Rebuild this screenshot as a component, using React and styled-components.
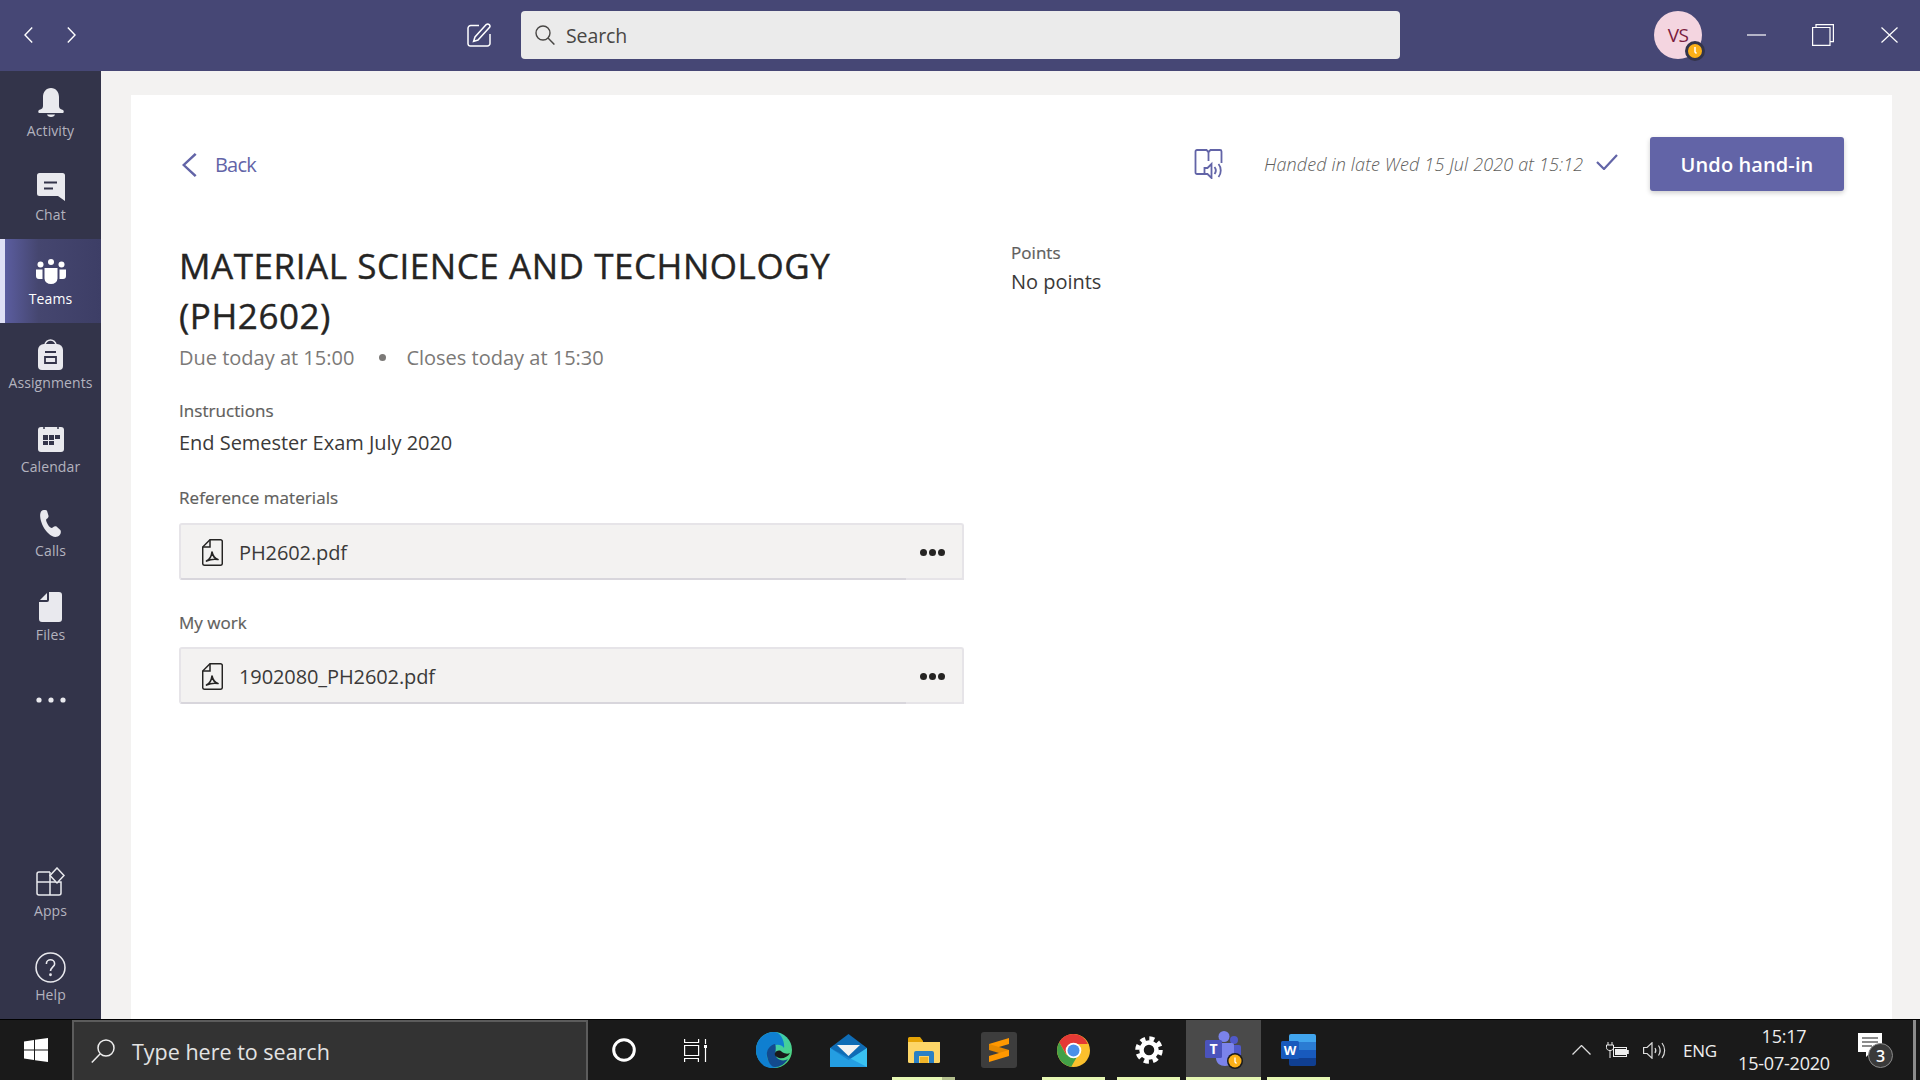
import React from "react";
import styled, { createGlobalStyle } from "styled-components";

const GlobalStyle = createGlobalStyle`
  html, body { margin: 0; padding: 0; height: 100%; overflow: hidden; }
  body { font-family: "Open Sans", "Noto Sans", sans-serif; background: #f3f2f1; }
  #root { height: 100%; }
  * { box-sizing: border-box; }
`;

const Page = styled.div`
  width: 1920px;
  height: 1080px;
  display: flex;
  flex-direction: column;
`;

/* top title bar */
const TitleBar = styled.header`
  height: 71px;
  flex: none;
  padding-bottom: 1px;
  display: flex;
  align-items: center;
  background: #464775;
  color: #fff;
`;
const NavArrows = styled.div`
  display: flex;
  gap: 34px;
  margin-left: 24px;
`;
const Compose = styled.div`
  display: flex;
  margin-left: 391px;
`;
const SearchBox = styled.div`
  width: 879px;
  height: 48px;
  margin-left: 30px;
  padding-left: 14px;
  display: flex;
  align-items: center;
  gap: 11px;
  background: #ebebeb;
  border-radius: 4px;
  color: #484644;
  font-size: 19.5px;
  letter-spacing: -0.1px;
`;
const Avatar = styled.div`
  position: relative;
  width: 48px;
  height: 48px;
  margin-left: 254px;
  border-radius: 50%;
  background: #f4d5e0;
  color: #7a1c3e;
  font-size: 19px;
  letter-spacing: -0.5px;
  display: flex;
  align-items: center;
  justify-content: center;
`;
const Presence = styled.span`
  position: absolute;
  right: -3px;
  bottom: -2px;
  width: 20px;
  height: 20px;
  border-radius: 50%;
  background: #fbb018;
  border: 3px solid #33344a;
  display: flex;
`;
const WindowButton = styled.div`
  display: flex;
  margin-left: ${(p) => p.$gap}px;
`;

/* rail + stage */
const Middle = styled.div`
  flex: 1;
  min-height: 0;
  display: flex;
`;
const Rail = styled.nav`
  width: 101px;
  flex: none;
  display: flex;
  flex-direction: column;
  background: #33344a;
`;
const RailSpacer = styled.div`
  flex: 1;
`;
const RailItem = styled.div`
  height: 84px;
  flex: none;
  padding-top: ${(p) => p.$top || 16}px;
  display: flex;
  flex-direction: column;
  align-items: center;
  color: ${(p) => (p.$active ? "#fff" : "#b3b3bf")};
  ${(p) =>
    p.$active &&
    `
    background: linear-gradient(90deg, #5b5d9f 0, #45466f 35%, #3d3e66 100%);
    border-left: 5px solid #dfe0f5;
    padding-right: 5px;
  `}
`;
const RailIcon = styled.div`
  height: 32px;
  display: flex;
  align-items: center;
  justify-content: center;
  color: ${(p) => (p.$active ? "#fff" : "#e9e9ee")};
`;
const RailLabel = styled.span`
  margin-top: 2px;
  font-size: 14px;
  line-height: 20px;
  letter-spacing: 0.1px;
`;
const Stage = styled.main`
  flex: 1;
  padding: 24px 28px 0 30px;
  background: #f3f2f1;
  display: flex;
`;
const Panel = styled.section`
  flex: 1;
  background: #fff;
  padding: 42px 48px 0 48px;
`;
const TopRow = styled.div`
  height: 54px;
  display: flex;
  align-items: center;
  justify-content: space-between;
`;
const BackLink = styled.div`
  display: flex;
  align-items: center;
  gap: 18px;
  margin-left: 3px;
  padding-top: 1px;
  color: #6264a7;
  font-size: 20px;
  letter-spacing: -0.8px;
`;
const Status = styled.div`
  display: flex;
  align-items: center;
`;
const HandedText = styled.span`
  margin-left: 40px;
  width: 320px;
  font-size: 18px;
  font-style: italic;
  font-weight: 300;
  letter-spacing: 0.14px;
  white-space: nowrap;
  color: #605e5c;
`;
const CheckMark = styled.div`
  display: flex;
  margin-left: 12px;
  margin-top: -4px;
`;
const UndoButton = styled.button`
  width: 194px;
  height: 54px;
  margin-left: 32px;
  border: none;
  border-radius: 3px;
  background: #6264a7;
  color: #fff;
  font-family: inherit;
  font-size: 20px;
  font-weight: 600;
  letter-spacing: 0.1px;
  box-shadow: 0 2px 5px rgba(0, 0, 0, 0.2);
`;
const Columns = styled.div`
  display: flex;
  gap: 47px;
  margin-top: 50px;
`;
const LeftColumn = styled.div`
  width: 785px;
`;
const RightColumn = styled.div`
  flex: 1;
`;
const Title = styled.h1`
  margin: 0;
  font-size: 35px;
  line-height: 50px;
  font-weight: 500;
  letter-spacing: 0.55px;
  -webkit-text-stroke: 0.4px #252423;
  color: #252423;
`;
const DueRow = styled.div`
  margin-top: 2px;
  height: 28px;
  display: flex;
  align-items: center;
  font-size: 20px;
  letter-spacing: 0;
  color: #7b7977;
`;
const Bullet = styled.span`
  width: 7px;
  height: 7px;
  margin: 0 20px 0 25px;
  border-radius: 50%;
  background: #7b7977;
`;
const SectionLabel = styled.div`
  margin-top: ${(p) => p.$top}px;
  font-size: 17px;
  line-height: 24px;
  font-weight: 500;
  letter-spacing: 0.05px;
  -webkit-text-stroke: 0.2px #605e5c;
  color: #605e5c;
`;
const BodyText = styled.div`
  margin-top: ${(p) => p.$top}px;
  font-size: 20px;
  line-height: 28px;
  letter-spacing: -0.03px;
  color: #3b3a39;
`;
const FileCard = styled.div`
  position: relative;
  height: 57px;
  margin-top: ${(p) => p.$top}px;
  padding: 1px 17px 0 21px;
  display: flex;
  align-items: center;
  background: #f3f2f1;
  border: 2px solid #e6e4e8;
  border-bottom-color: #d8d6dc;
  border-radius: 3px;

  &::after {
    content: "";
    position: absolute;
    right: -2px;
    bottom: -2px;
    width: 58px;
    height: 2px;
    background: #e6e4e8;
  }
`;
const FileName = styled.span`
  margin-left: 16px;
  font-size: 20px;
  letter-spacing: -0.1px;
  color: #3b3a39;
`;
const MoreDots = styled.div`
  margin-left: auto;
  display: flex;
  gap: 2px;
`;
const Dot = styled.i`
  width: 7px;
  height: 7px;
  border-radius: 50%;
  background: #252423;
`;

/* windows taskbar */
const Taskbar = styled.footer`
  height: 61px;
  flex: none;
  display: flex;
  align-items: stretch;
  background: #1a1a1a;
  border-top: 1px solid #000;
  color: #fff;
`;
const StartCell = styled.div`
  width: 72px;
  flex: none;
  padding-left: 24px;
  display: flex;
  align-items: center;
`;
const TaskSearch = styled.div`
  width: 516px;
  flex: none;
  padding-left: 17px;
  display: flex;
  align-items: center;
  gap: 16px;
  background: #333;
  border: 2px solid #5c5c5c;
  border-bottom: none;
  font-size: 21.5px;
  letter-spacing: 0;
  color: #e3e3e3;
`;
const TaskCell = styled.div`
  position: relative;
  width: ${(p) => p.$w || 75}px;
  flex: none;
  margin-left: ${(p) => p.$ml || 0}px;
  display: flex;
  align-items: center;
  justify-content: center;
  background: ${(p) => (p.$current ? "#4a4a4a" : "transparent")};
  ${(p) =>
    p.$open &&
    `
    &::after {
      content: "";
      position: absolute;
      left: ${p.$current ? 0 : 6}px;
      right: ${p.$current ? 0 : 6}px;
      bottom: 0;
      height: 3px;
      background: ${p.$stacked ? "linear-gradient(90deg, #e6f7b3 80%, #b4c08e 80%)" : "#e6f7b3"};
    }
  `}
`;
const Tray = styled.div`
  flex: 1;
  display: flex;
  align-items: center;
  padding-left: 236px;
  position: relative;
`;
const TrayIcon = styled.div`
  display: flex;
  margin-left: ${(p) => p.$ml}px;
`;
const TrayText = styled.span`
  margin-left: 17px;
  font-size: 17px;
  letter-spacing: -0.2px;
  color: #eee;
`;
const Clock = styled.div`
  width: 96px;
  margin-left: 19px;
  text-align: center;
  font-size: 18px;
  line-height: 27px;
  letter-spacing: -0.2px;
  color: #eee;
`;
const Notice = styled.div`
  position: relative;
  display: flex;
  margin-left: 26px;
  margin-top: -10px;
`;
const NoticeBadge = styled.span`
  position: absolute;
  left: 10px;
  top: 10px;
  width: 25px;
  height: 25px;
  border-radius: 50%;
  background: #3a3a3a;
  border: 1.5px solid #8a8a8a;
  display: flex;
  align-items: center;
  justify-content: center;
  font-size: 16px;
  font-weight: 600;
`;
const DesktopEdge = styled.div`
  position: absolute;
  right: 4px;
  top: 0;
  bottom: 0;
  width: 3px;
  background: #8c8c8c;
`;

/* ---- drawings ---- */
const Chevron = ({ dir = "left", w = 9, h = 16, sw = 1.4, color = "#fff" }) => (
  <svg width={w} height={h} viewBox="0 0 9 16" fill="none" preserveAspectRatio="none">
    <path d={dir === "left" ? "M8.2 .6 1 8l7.2 7.4" : "M.8 .6 8 8 .8 15.4"} stroke={color} strokeWidth={sw} />
  </svg>
);

const ComposeIcon = () => (
  <svg width="24" height="24" viewBox="0 0 24 24" fill="none" stroke="#fff" strokeWidth="1.5">
    <path d="M12 2.5H4A2.8 2.8 0 0 0 1 5.3v15.4A2.5 2.5 0 0 0 3.6 23h16.6a2.6 2.6 0 0 0 2.8-2.6V11" />
    <path d="M19.2 1.6a2.2 2.2 0 0 1 3.2 3L11 17l-4.4 1.4L8 14z" />
  </svg>
);

const SearchIcon = ({ color = "#484644", size = 20 }) => (
  <svg width={size} height={size} viewBox="0 0 20 20" fill="none" stroke={color} strokeWidth="1.4">
    <circle cx="8" cy="8" r="7" />
    <path d="m13 13 6.4 6.6" />
  </svg>
);

const BellIcon = () => (
  <svg width="26" height="30" viewBox="0 0 26 30" fill="currentColor">
    <path d="M13 0C8 0 5 4 5 9v9c0 2-1 3-4 4-1 .4-1 3 0 3h24c1 0 1-2.600 0-3-3-1-4-2-4-4V9c0-5-3-9-8-9z" />
    <path d="M9 26.500h8c0 1-2 2.500-4 2.500s-4-1.500-4-2.500z" />
  </svg>
);
const ChatIcon = () => (
  <svg width="28" height="28" viewBox="0 0 28 28">
    <path fill="currentColor" d="M2.500 0h23A2.500 2.500 0 0 1 28 2.500V28l-7-5H2.500A2.500 2.500 0 0 1 0 20.500v-18A2.500 2.500 0 0 1 2.500 0z" />
    <path stroke="#33344a" strokeWidth="2" d="M7 9.500h13M7 15.500h9" />
  </svg>
);
const TeamsRailIcon = () => (
  <svg width="30" height="25" viewBox="0 0 30 25" fill="currentColor">
    <circle cx="15" cy="3" r="3" />
    <circle cx="4.500" cy="5.500" r="3" />
    <circle cx="25.500" cy="5.500" r="3" />
    <path d="M0 10.500h6.500v9.500H3a3 3 0 0 1-3-3zM23.500 10.500H30V17a3 3 0 0 1-3 3h-3.500z" />
    <path d="M8.500 9h13v10.500a6.500 5.500 0 0 1-13 0z" />
  </svg>
);
const BagIcon = () => (
  <svg width="25" height="33" viewBox="0 0 25 33">
    <path fill="none" stroke="currentColor" strokeWidth="1.500" d="M7 6c0-3 3-5 5.500-5S18 3 18 6" />
    <path fill="currentColor" d="M6 5h13a6 6 0 0 1 6 6v16a4 4 0 0 1-4 4H4a4 4 0 0 1-4-4V11a6 6 0 0 1 6-6z" />
    <path fill="none" stroke="#33344a" strokeWidth="1.800" d="M7 13h11M7 18h11v6H7z" />
  </svg>
);
const CalendarIcon = () => (
  <svg width="26" height="28" viewBox="0 0 26 28">
    <path fill="currentColor" d="M3 2h20a3 3 0 0 1 3 3v19a3 3 0 0 1-3 3H3a3 3 0 0 1-3-3V5a3 3 0 0 1 3-3z" />
    <path stroke="#33344a" strokeWidth="1.500" d="M6 0v4M20 0v4" />
    <path fill="#33344a" d="M5 10h5v5H5zM11 10h5v5h-5zM17 10h5v4h-5zM5 16h5v4H5zM11 16h5v4h-5z" />
  </svg>
);
const PhoneIcon = () => (
  <svg width="22" height="27" viewBox="0 0 22 27" fill="currentColor">
    <path d="M1.500 1C3-.3 6-.4 7 .8l1.500 5c.3 1.200-.6 2.400-2 3.200-.6.500-.5 1.500 0 2.800.8 2.200 2 4.200 3.600 5.500 1 .7 2 .8 2.600.3 1.200-1 2.700-1.600 3.800-1l3.800 3.400c1 1 .6 3.800-.8 5.300-1.600 1.700-4.800 2.200-7.500.7-4.800-2.800-8.700-8-10.600-13.800C-.2 7.800-.4 3 1.500 1z" />
  </svg>
);
const FileIcon = () => (
  <svg width="23" height="30" viewBox="0 0 23 30" fill="currentColor">
    <path d="M10 0h10a3 3 0 0 1 3 3v24a3 3 0 0 1-3 3H3a3 3 0 0 1-3-3V10h8a2 2 0 0 0 2-2z" />
    <path d="M8 1v6.500a.5.5 0 0 1-.5.500H1z" />
  </svg>
);
const AppsIcon = () => (
  <svg width="29" height="32" viewBox="0 0 29 32" fill="none" stroke="currentColor" strokeWidth="1.500">
    <path d="M14 5H3a2 2 0 0 0-2 2v19a2 2 0 0 0 2 2h20a2 2 0 0 0 2-2V15H1M14 5v23" />
    <path d="m21 1 7 7.500-7 7.500-7-7.500z" fill="#33344a" />
  </svg>
);
const HelpIcon = () => (
  <svg width="31" height="31" viewBox="0 0 30 30" fill="none" stroke="currentColor" strokeWidth="1.500">
    <circle cx="15" cy="15" r="14" />
    <path d="M11 11.500c0-2.500 2-4 4-4s4 1.500 4 4-4 3.500-4 7" />
    <circle cx="15" cy="22" r=".6" fill="currentColor" />
  </svg>
);
const ClockTick = () => (
  <svg width="14" height="14" viewBox="0 0 14 14" fill="none" stroke="#fff" strokeWidth="1.500">
    <path d="M7 3v5l1.500 1.500" />
  </svg>
);
const BookAudioIcon = () => (
  <svg width="31" height="30" viewBox="0 0 28 30" fill="none" stroke="#6264a7" strokeWidth="1.800">
    <path d="M13 25H2.500A1.500 1.500 0 0 1 1 23.500V2.500A1.500 1.500 0 0 1 2.500 1H12l2 2 2-2h9.500A1.500 1.500 0 0 1 27 2.500V14" />
    <path d="M14 3v9" />
    <path d="M10 19h3l4-4v14l-4-4h-3z" fill="#fff" />
    <path d="M20 18c1.500 2 1.500 5 0 7M24 15c3 3.500 3 9.500 0 13" />
  </svg>
);
const PdfIcon = () => (
  <svg width="21" height="27" viewBox="0 0 21 27" fill="none" stroke="#252423" strokeWidth="1.500">
    <path d="M8 .8h10.500a1.800 1.800 0 0 1 1.800 1.800v21.800a1.800 1.800 0 0 1-1.800 1.800h-16a1.800 1.800 0 0 1-1.800-1.800V8z" />
    <path d="M8 .8V8H.7" />
    <path d="M4.500 22c3-1.500 5-4.500 5.500-9 .8 4 2.500 6.500 6 7.500-3.500-.5-8 0-11.500 1.500z" strokeWidth="1.700" strokeLinejoin="round" />
  </svg>
);

const WindowsLogo = () => (
  <svg width="24" height="24" viewBox="0 0 24 24" fill="#fff">
    <path d="M0 3.400 10 2v9.500H0zM11 1.800 24 0v11.500H11zM0 12.500h10V22L0 20.600zM11 12.500h13V24l-13-1.800z" />
  </svg>
);
const CortanaIcon = () => (
  <svg width="24" height="24" viewBox="0 0 24 24" fill="none" stroke="#fff" strokeWidth="3">
    <circle cx="12" cy="12" r="10.300" />
  </svg>
);
const TaskViewIcon = () => (
  <svg width="23" height="23" viewBox="0 0 23 23" fill="none" stroke="#fff" strokeWidth="1.200">
    <path d="M.6 0v3.500h14V0M.6 6.500h14v10H.6zM0 19.500h15M.6 19.500V23M14.400 19.500V23M21.500 0v5M21.500 9v14" />
    <rect x="20" y="6" width="3" height="3" fill="#fff" stroke="none" />
  </svg>
);
const EdgeIcon = () => (
  <svg width="36" height="36" viewBox="0 0 36 36">
    <defs>
      <linearGradient id="edgeA" x1="0" y1="0" x2="1" y2="1">
        <stop offset="0" stopColor="#2fc3d6" />
        <stop offset="1" stopColor="#54d86f" />
      </linearGradient>
    </defs>
    <circle cx="18" cy="18" r="18" fill="url(#edgeA)" />
    <path fill="#0f7fd0" d="M18 0C8 0 0 8 0 18c0 10 7 18 16 18 3 0 6-1 8-2-6 1-12-3-13-9-1-6 3-11 9-12 4-.6 7 1 8 3 1-6-3-16-10-16z" />
    <path fill="#134a8e" d="M11 24c-1-6 3-11 8-12 2 4-1 10 2 14 3 3 8 3 11 1-3 5-8 8-13 8-4 0-7-5-8-11z" />
    <path fill="#1a1a1a" d="M19 21c2-3 5-3 7-1 3 2 6 2 8 1-2 4-7 6-11 5-3-1-5-3-4-5z" />
  </svg>
);
const MailIcon = () => (
  <svg width="37" height="33" viewBox="0 0 37 33">
    <path fill="#0f6cb5" d="M18.500 0 37 14v19H0V14z" />
    <path fill="#f2f2f2" d="M7 11h23L18.500 22z" />
    <path fill="#39c1f1" d="M0 14 18.500 26 37 14v19H0z" />
    <path fill="#1b8fdc" d="M0 33V14l37 19z" opacity=".7" />
  </svg>
);
const FolderIcon = () => (
  <svg width="32" height="26" viewBox="0 0 32 26">
    <path fill="#e5a406" d="M0 1.500A1.500 1.500 0 0 1 1.500 0H12l3 4v6H0z" />
    <path fill="#fdd667" d="M0 5h32v19.500a1.500 1.500 0 0 1-1.500 1.500h-29A1.500 1.500 0 0 1 0 24.500z" />
    <path fill="#2a80c4" d="M6 26V16a2 2 0 0 1 2-2h16a2 2 0 0 1 2 2v10h-5v-7H11v7z" />
    <path fill="#f0b429" d="M12 20h8v6h-8z" />
  </svg>
);
const SublimeIcon = () => (
  <svg width="36" height="36" viewBox="0 0 36 36">
    <rect width="36" height="36" rx="3" fill="#3d3d3d" />
    <path fill="#ff9800" d="M8 12 28 6v6L8 18z" />
    <path fill="#e58900" d="M8 12 28 18v6L8 18z" />
    <path fill="#ff9800" d="M28 18 8 24v6l20-6z" />
  </svg>
);
const ChromeIcon = () => (
  <svg width="33" height="33" viewBox="0 0 33 33">
    <circle cx="16.500" cy="16.500" r="16.500" fill="#fbc02d" />
    <path fill="#e53935" d="M16.500 0A16.500 16.500 0 0 0 2.200 8.300l7 12L16.500 10h14.300A16.500 16.500 0 0 0 16.500 0z" />
    <path fill="#43a047" d="M2.200 8.300a16.500 16.500 0 0 0 12 24.500l7-12-12 .0z" />
    <circle cx="16.500" cy="16.500" r="7.800" fill="#fff" />
    <circle cx="16.500" cy="16.500" r="6" fill="#4a90e8" />
  </svg>
);
const GearIcon = () => (
  <svg width="28" height="28" viewBox="0 0 28 28" fill="none" stroke="#fff">
    <circle cx="14" cy="14" r="7.500" strokeWidth="4.500" />
    <circle cx="14" cy="14" r="11.500" strokeWidth="4.500" strokeDasharray="5 4.030" />
  </svg>
);
const TeamsAppIcon = () => (
  <svg width="38" height="38" viewBox="0 0 38 38">
    <circle cx="19" cy="5.500" r="5.500" fill="#7b83eb" />
    <circle cx="29" cy="9" r="4" fill="#5059c9" />
    <path fill="#5059c9" d="M24 14h10a2 2 0 0 1 2 2v9c0 3-3 5-6 5h-6z" />
    <path fill="#7b83eb" d="M11 12h16a2 2 0 0 1 2 2v13c0 5-4 8-9 8s-9-3-9-8z" />
    <rect x="0" y="9" width="17" height="18" rx="1.500" fill="#4b53bc" />
    <text x="8.500" y="23" textAnchor="middle" fontFamily="Open Sans, sans-serif" fontSize="14" fontWeight="700" fill="#fff">T</text>
    <circle cx="30" cy="30" r="8" fill="#1a1a1a" />
    <circle cx="30" cy="30" r="6.500" fill="#fbb018" />
    <path stroke="#fff" strokeWidth="1.300" fill="none" d="M30 26.500V31l1.500 1.500" />
  </svg>
);
const WordIcon = () => (
  <svg width="35" height="32" viewBox="0 0 35 32">
    <path fill="#41a5ee" d="M10 0h23a2 2 0 0 1 2 2v6H8V2a2 2 0 0 1 2-2z" />
    <path fill="#2b7cd3" d="M8 8h27v8H8z" />
    <path fill="#185abd" d="M8 16h27v8H8z" />
    <path fill="#103f91" d="M8 24h27v6a2 2 0 0 1-2 2H10a2 2 0 0 1-2-2z" />
    <rect x="0" y="7" width="18" height="18" rx="1.500" fill="#185abd" />
    <text x="9" y="21" textAnchor="middle" fontFamily="Open Sans, sans-serif" fontSize="13" fontWeight="700" fill="#fff">W</text>
  </svg>
);
const TrayChevron = () => (
  <svg width="19" height="10" viewBox="0 0 19 10" fill="none" stroke="#ddd" strokeWidth="1.300">
    <path d="m.5 9.500 9-9 9 9" />
  </svg>
);
const BatteryIcon = () => (
  <svg width="23" height="17" viewBox="0 0 23 17" fill="none" stroke="#eee" strokeWidth="1">
    <path d="M2 0v3M6 0v3M.5 3h7v2.500c0 2-1.500 3-3.500 3S.5 7.500.5 5.500zM4 8.500V16" />
    <rect x="7.500" y="5.500" width="13" height="9" fill="#1a1a1a" />
    <rect x="9" y="7" width="11" height="6" fill="#eee" stroke="none" />
    <path d="M21.800 8v4" strokeWidth="2" />
  </svg>
);
const VolumeIcon = () => (
  <svg width="23" height="17" viewBox="0 0 23 17" fill="none" stroke="#ddd" strokeWidth="1.200">
    <path d="M.6 5.500h3.500L9 .8v15.400l-4.900-4.700H.6z" />
    <path d="M12 6c1 1.500 1 3.500 0 5M15.500 3.500c2 3 2 7 0 10M19 1c3.500 4.500 3.500 10.500 0 15" />
  </svg>
);
const NoticeIcon = () => (
  <svg width="24" height="24" viewBox="0 0 24 24">
    <path fill="#fff" d="M0 0h24v19H13l-5 5v-5H0z" />
    <path stroke="#1a1a1a" strokeWidth="1.200" d="M4 5h16M4 9h16M4 13h10" />
  </svg>
);

const FileRow = ({ name, top }) => (
  <FileCard $top={top}>
    <PdfIcon />
    <FileName>{name}</FileName>
    <MoreDots>
      <Dot />
      <Dot />
      <Dot />
    </MoreDots>
  </FileCard>
);

const railTop = [
  { label: "Activity", icon: <BellIcon /> },
  { label: "Chat", icon: <ChatIcon /> },
  { label: "Teams", icon: <TeamsRailIcon />, active: true },
  { label: "Assignments", icon: <BagIcon /> },
  { label: "Calendar", icon: <CalendarIcon /> },
  { label: "Calls", icon: <PhoneIcon /> },
  { label: "Files", icon: <FileIcon /> },
];

const apps = [
  { icon: <EdgeIcon /> },
  { icon: <MailIcon /> },
  { icon: <FolderIcon />, open: true, stacked: true },
  { icon: <SublimeIcon /> },
  { icon: <ChromeIcon />, open: true },
  { icon: <GearIcon />, open: true },
  { icon: <TeamsAppIcon />, open: true, current: true },
  { icon: <WordIcon />, open: true },
];

export default function App() {
  return (
    <Page>
      <GlobalStyle />
      <TitleBar>
        <NavArrows>
          <Chevron dir="left" />
          <Chevron dir="right" />
        </NavArrows>
        <Compose>
          <ComposeIcon />
        </Compose>
        <SearchBox>
          <SearchIcon />
          Search
        </SearchBox>
        <Avatar>
          VS
          <Presence>
            <ClockTick />
          </Presence>
        </Avatar>
        <WindowButton $gap={45}>
          <svg width="19" height="2" viewBox="0 0 19 2">
            <path d="M0 1h19" stroke="#fff" strokeWidth="1.200" />
          </svg>
        </WindowButton>
        <WindowButton $gap={46}>
          <svg width="22" height="22" viewBox="0 0 22 22" fill="none" stroke="#fff" strokeWidth="1.200">
            <path d="M4 3V.6h17.400v17H18" />
            <path d="M.6 3.500h17.400v17.900H.6z" />
          </svg>
        </WindowButton>
        <WindowButton $gap={47}>
          <svg width="17" height="16" viewBox="0 0 17 16" fill="none" stroke="#fff" strokeWidth="1.200">
            <path d="m.5.5 16 15M16.500.5l-16 15" />
          </svg>
        </WindowButton>
      </TitleBar>

      <Middle>
        <Rail>
          {railTop.map((item) => (
            <RailItem key={item.label} $active={item.active}>
              <RailIcon $active={item.active}>{item.icon}</RailIcon>
              <RailLabel>{item.label}</RailLabel>
            </RailItem>
          ))}
          <RailItem $top={25}>
            <RailIcon>
              <svg width="30" height="6" viewBox="0 0 30 6" fill="currentColor">
                <circle cx="3" cy="3" r="2.600" />
                <circle cx="15" cy="3" r="2.600" />
                <circle cx="27" cy="3" r="2.600" />
              </svg>
            </RailIcon>
          </RailItem>
          <RailSpacer />
          <RailItem>
            <RailIcon>
              <AppsIcon />
            </RailIcon>
            <RailLabel>Apps</RailLabel>
          </RailItem>
          <RailItem>
            <RailIcon>
              <HelpIcon />
            </RailIcon>
            <RailLabel>Help</RailLabel>
          </RailItem>
        </Rail>

        <Stage>
          <Panel>
            <TopRow>
              <BackLink>
                <Chevron dir="left" w={15} h={24} sw={1.5} color="#6264a7" />
                Back
              </BackLink>
              <Status>
                <BookAudioIcon />
                <HandedText>Handed in late Wed 15 Jul 2020 at 15:12</HandedText>
                <CheckMark>
                  <svg width="22" height="16" viewBox="0 0 22 16" fill="none" stroke="#6264a7" strokeWidth="2.200">
                    <path d="m1 8 7 7L21 1" />
                  </svg>
                </CheckMark>
                <UndoButton>Undo hand-in</UndoButton>
              </Status>
            </TopRow>
            <Columns>
              <LeftColumn>
                <Title>
                  MATERIAL SCIENCE AND TECHNOLOGY
                  <br />
                  (PH2602)
                </Title>
                <DueRow>
                  Due today at 15:00
                  <Bullet />
                  Closes today at 15:30
                </DueRow>
                <SectionLabel $top={28}>Instructions</SectionLabel>
                <BodyText $top={6}>End Semester Exam July 2020</BodyText>
                <SectionLabel $top={29}>Reference materials</SectionLabel>
                <FileRow name="PH2602.pdf" top={13} />
                <SectionLabel $top={31}>My work</SectionLabel>
                <FileRow name="1902080_PH2602.pdf" top={12} />
              </LeftColumn>
              <RightColumn>
                <SectionLabel $top={0}>Points</SectionLabel>
                <BodyText $top={3}>No points</BodyText>
              </RightColumn>
            </Columns>
          </Panel>
        </Stage>
      </Middle>

      <Taskbar>
        <StartCell>
          <WindowsLogo />
        </StartCell>
        <TaskSearch>
          <svg width="25" height="24" viewBox="0 0 25 24" fill="none" stroke="#eee" strokeWidth="1.500">
            <circle cx="15" cy="9" r="8" />
            <path d="M9 15 .8 23.400" />
          </svg>
          Type here to search
        </TaskSearch>
        <TaskCell $w={72}>
          <CortanaIcon />
        </TaskCell>
        <TaskCell $w={70}>
          <TaskViewIcon />
        </TaskCell>
        {apps.map((app, i) => (
          <TaskCell key={i} $ml={i === 0 ? 6 : 0} $open={app.open} $current={app.current} $stacked={app.stacked}>
            {app.icon}
          </TaskCell>
        ))}
        <Tray>
          <TrayChevron />
          <TrayIcon $ml={15}>
            <BatteryIcon />
          </TrayIcon>
          <TrayIcon $ml={14}>
            <VolumeIcon />
          </TrayIcon>
          <TrayText>ENG</TrayText>
          <Clock>
            15:17
            <br />
            15-07-2020
          </Clock>
          <Notice>
            <NoticeIcon />
            <NoticeBadge>3</NoticeBadge>
          </Notice>
          <DesktopEdge />
        </Tray>
      </Taskbar>
    </Page>
  );
}
